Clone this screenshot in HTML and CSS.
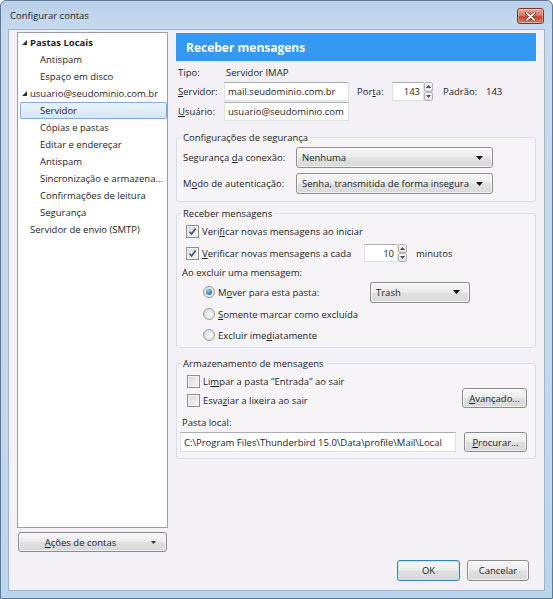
FILE: index.html
```html
<!DOCTYPE html>
<html lang="pt-BR">
<head>
<meta charset="utf-8">
<title>Configurar contas</title>
<link rel="stylesheet" href="styles.css">
</head>
<body>
<div class="window">
  <div class="titlebar">
    <span class="title">Configurar contas</span>
    <div class="close">
      <svg width="11" height="9" viewBox="0 0 11 9"><path d="M1.5 1 L9.5 8 M9.5 1 L1.5 8" stroke="#5a1d12" stroke-width="3.2" stroke-linecap="round"/><path d="M1.5 1 L9.5 8 M9.5 1 L1.5 8" stroke="#ffffff" stroke-width="1.8" stroke-linecap="round"/></svg>
    </div>
  </div>
  <div class="client">
    <div class="panes">
      <div class="sidebar">
        <div class="tree">
          <div class="item lvl0 bold"><span class="exp"><svg width="5" height="5" viewBox="0 0 5 5"><polygon points="5,0 5,5 0,5" fill="#333"/></svg></span>Pastas Locais</div>
          <div class="item lvl1">Antispam</div>
          <div class="item lvl1">Espaço em disco</div>
          <div class="item lvl0"><span class="exp"><svg width="5" height="5" viewBox="0 0 5 5"><polygon points="5,0 5,5 0,5" fill="#333"/></svg></span>usuario@seudominio.com.br</div>
          <div class="item lvl1 selected">Servidor</div>
          <div class="item lvl1">Cópias e pastas</div>
          <div class="item lvl1">Editar e endereçar</div>
          <div class="item lvl1">Antispam</div>
          <div class="item lvl1">Sincronização e armazena...</div>
          <div class="item lvl1">Confirmações de leitura</div>
          <div class="item lvl1">Segurança</div>
          <div class="item lvl0 noexp">Servidor de envio (SMTP)</div>
        </div>
        <div class="btn actions"><span class="btn-text"><u>A</u>ções de contas</span><span class="btn-arrow"><svg width="5" height="3" viewBox="0 0 5 3"><polygon points="0,0 5,0 2.5,3" fill="#333"/></svg></span></div>
      </div>
      <div class="main">
        <div class="header">Receber mensagens</div>
        <div class="srow tipo"><span class="lbl">Tipo:</span><span class="val">Servidor IMAP</span></div>
        <div class="srow"><span class="lbl"><u>S</u>ervidor:</span><div class="input w-server">mail.seudominio.com.br</div><span class="lbl-porta">Por<u>t</u>a:</span><div class="input w-port right">143</div><div class="spin"><span class="up"><svg width="5" height="3" viewBox="0 0 5 3"><polygon points="0,3 5,3 2.5,0" fill="#4d4d4d"/></svg></span><span class="down"><svg width="5" height="3" viewBox="0 0 5 3"><polygon points="0,0 5,0 2.5,3" fill="#4d4d4d"/></svg></span></div><span class="lbl-padrao">Padrão:</span><span>143</span></div>
        <div class="srow user"><span class="lbl"><u>U</u>suário:</span><div class="input w-server">usuario@seudominio.com</div></div>

        <fieldset class="group sec">
          <legend>Configurações de segurança</legend>
          <div class="frow"><span class="flbl">Segurança <u>d</u>a conexão:</span><div class="select w-sec"><span>Nenhuma</span><svg width="7" height="4" viewBox="0 0 7 4"><polygon points="0,0 7,0 3.5,4" fill="#111"/></svg></div></div>
          <div class="frow r2"><span class="flbl">M<u>o</u>do de autenticação:</span><div class="select w-sec"><span>Senha, transmitida de forma insegura</span><svg width="7" height="4" viewBox="0 0 7 4"><polygon points="0,0 7,0 3.5,4" fill="#111"/></svg></div></div>
        </fieldset>

        <fieldset class="group recv">
          <legend>Receber mensagens</legend>
          <div class="crow c1"><span class="cb"><svg width="9" height="9" viewBox="0 0 9 9"><path d="M1.5 4.8 L3.6 7 L7.6 1.6" fill="none" stroke="#3b4f86" stroke-width="1.6"/></svg></span><span>Veri<u>f</u>icar novas mensagens ao iniciar</span></div>
          <div class="crow c2"><span class="cb"><svg width="9" height="9" viewBox="0 0 9 9"><path d="M1.5 4.8 L3.6 7 L7.6 1.6" fill="none" stroke="#3b4f86" stroke-width="1.6"/></svg></span><span class="c2lbl"><u>V</u>erificar novas mensagens a cada</span><div class="input w-min right">10</div><div class="spin tall"><span class="up"><svg width="5" height="3" viewBox="0 0 5 3"><polygon points="0,3 5,3 2.5,0" fill="#4d4d4d"/></svg></span><span class="down"><svg width="5" height="3" viewBox="0 0 5 3"><polygon points="0,0 5,0 2.5,3" fill="#4d4d4d"/></svg></span></div><span class="minutos">minutos</span></div>
          <div class="plain excl">Ao excluir uma mensagem:</div>
          <div class="rrow r1"><span class="radio on"><span class="dot"></span></span><span class="rlbl">M<u>o</u>ver para esta pasta:</span><div class="select w-trash"><span>Trash</span><svg width="7" height="4" viewBox="0 0 7 4"><polygon points="0,0 7,0 3.5,4" fill="#111"/></svg></div></div>
          <div class="rrow r2"><span class="radio"></span><span><u>S</u>omente marcar como excluída</span></div>
          <div class="rrow r3"><span class="radio"></span><span>Excluir ime<u>d</u>iatamente</span></div>
        </fieldset>

        <fieldset class="group store">
          <legend>Armazenamento de mensagens</legend>
          <div class="store-top">
            <div class="checks">
              <div class="crow s1"><span class="cb"></span><span>Li<u>m</u>par a pasta “Entrada” ao sair</span></div>
              <div class="crow s2"><span class="cb"></span><span>Esva<u>z</u>iar a lixeira ao sair</span></div>
            </div>
            <div class="btn w-adv"><u>A</u>vançado...</div>
          </div>
          <div class="plain pasta">Pasta local:</div>
          <div class="path-row"><div class="input w-path">C:\Program Files\Thunderbird 15.0\Data\profile\Mail\Local</div><div class="btn w-proc"><u>P</u>rocurar...</div></div>
        </fieldset>
      </div>
    </div>
    <div class="footer">
      <div class="btn default w-ok">OK</div>
      <div class="btn w-cancel">Cancelar</div>
    </div>
  </div>
</div>
</body>
</html>
```

FILE: styles.css
```css
* { box-sizing: border-box; }
html, body { margin: 0; padding: 0; }
body {
  font-family: "Open Sans", "Noto Sans", sans-serif;
  font-size: 9.5px;
  color: #1e1e1e;
  background: #ffffff;
}
u { text-decoration: underline; text-underline-offset: 1px; }

.window {
  width: 553px;
  height: 599px;
  display: flex;
  flex-direction: column;
  border: 1px solid #5f7895;
  border-radius: 6px 6px 0 0;
  background: linear-gradient(to bottom, #bad1ea 0px, #c6d9ee 28px, #c4d8ee 60%, #b9d6ee 100%);
}

.titlebar {
  height: 28px;
  display: flex;
  align-items: flex-start;
  justify-content: space-between;
  padding: 7px 8px 0 9px;
}
.title { line-height: 15px; color: #1b1b1b; }
.close {
  width: 27px;
  height: 16px;
  border: 1px solid #7a3528;
  border-radius: 3px;
  background: linear-gradient(to bottom, #e9a89a 0%, #d77a66 45%, #c4472e 55%, #d47e68 100%);
  display: flex;
  align-items: center;
  justify-content: center;
  box-shadow: inset 0 0 0 1px rgba(255,255,255,0.35);
}

.client {
  flex: 1;
  margin: 0 7px 7px 7px;
  border: 1px solid #9fb4cc;
  background: #f4f1f6;
  padding: 2px 8px 9px 8px;
  display: flex;
  flex-direction: column;
}

.panes {
  height: 520px;
  display: flex;
  gap: 8px;
}

.sidebar {
  width: 151px;
  display: flex;
  flex-direction: column;
  gap: 4px;
}
.tree {
  height: 496px;
  background: #ffffff;
  border: 1px solid #9a9ea6;
  padding-top: 1px;
}
.item {
  height: 17px;
  line-height: 15px;
  display: flex;
  align-items: center;
  white-space: nowrap;
  border: 1px solid transparent;
  color: #1e1e1e;
}
.lvl0 { padding-left: 3px; }
.lvl0.noexp { padding-left: 11px; }
.lvl1 { padding-left: 21px; }
.bold { font-weight: bold; }
.exp { width: 8px; display: inline-flex; align-items: center; }
.selected {
  margin-left: 2px;
  padding-left: 19px;
  border: 1px solid #84acdd;
  border-radius: 2px;
  background: linear-gradient(to bottom, #eaf3fd 0%, #d3e6fc 100%);
}

.btn {
  height: 20px;
  border: 1px solid #8c8c8c;
  border-radius: 3px;
  background: linear-gradient(to bottom, #f7f7f7 0%, #ececec 48%, #dfdfdf 52%, #d8d8d8 100%);
  display: flex;
  align-items: center;
  justify-content: center;
  color: #1e1e1e;
  white-space: nowrap;
  box-shadow: inset 0 0 0 1px rgba(255,255,255,0.6);
}
.actions {
  width: 149px;
  margin-left: 1px;
  justify-content: flex-start;
}
.btn-text { flex: 1; text-align: center; padding-left: 2px; }
.btn-arrow { width: 26px; display: flex; justify-content: center; }

.main {
  width: 360px;
  display: flex;
  flex-direction: column;
}
.header {
  margin-top: 1px;
  height: 28px;
  background: #3598f2;
  color: #ffffff;
  font-weight: bold;
  font-size: 12px;
  display: flex;
  align-items: center;
  padding-left: 10px;
}

.srow {
  display: flex;
  align-items: center;
  height: 19px;
  margin-top: 2px;
  white-space: nowrap;
}
.srow.tipo { margin-top: 3px; height: 16px; }
.srow.user { margin-top: 1px; }
.lbl { width: 48px; padding-left: 2px; }
.val { padding-left: 2px; }
.lbl-porta { margin-left: 8px; width: 35px; }
.lbl-padrao { margin-left: 10px; width: 43px; }

.input {
  height: 19px;
  background: #ffffff;
  border: 1px solid #dde2e8;
  border-top-color: #abadb3;
  padding: 0 3px;
  display: flex;
  align-items: center;
  overflow: hidden;
  white-space: nowrap;
}
.input.right { justify-content: flex-end; }
.w-server { width: 125px; }
.w-port { width: 32px; }
.w-min { width: 34px; height: 18px; font-weight: normal; }
.w-path { width: 276px; height: 20px; }

.spin {
  width: 9px;
  height: 19px;
  display: flex;
  flex-direction: column;
}
.spin.tall { height: 18px; }
.spin span {
  flex: 1;
  display: flex;
  align-items: center;
  justify-content: center;
  border: 1px solid #b4b4b4;
  border-radius: 2px;
  background: linear-gradient(to bottom, #f8f8f8, #e2e2e2);
}

.group {
  margin: 0;
  border: 1px solid #d5dfe5;
  border-radius: 3px;
  padding: 0 8px 0 4px;
  background: rgba(255,255,255,0.25);
  min-width: 0;
}
.group legend {
  padding: 0 2px;
  line-height: 13px;
  color: #1e1e1e;
}
.sec { margin-top: 10px; padding-bottom: 7px; }
.recv { margin-top: 5px; padding-bottom: 3px; }
.store { margin-top: 9px; padding-bottom: 6px; }

.frow {
  display: flex;
  align-items: center;
  margin-top: 3px;
  white-space: nowrap;
}
.frow.r2 { margin-top: 5px; }
.flbl { width: 115px; padding-left: 2px; }

.select {
  height: 21px;
  border: 1px solid #8e8e8e;
  border-radius: 3px;
  background: linear-gradient(to bottom, #f6f6f6 0%, #ececec 48%, #e0e0e0 52%, #dadada 100%);
  box-shadow: inset 0 0 0 1px rgba(255,255,255,0.6);
  display: flex;
  align-items: center;
  justify-content: space-between;
  padding: 0 9px 0 5px;
  white-space: nowrap;
}
.w-sec { width: 197px; }
.w-trash { width: 100px; }

.crow {
  display: flex;
  align-items: center;
  height: 18px;
  white-space: nowrap;
}
.c1 { margin-top: 2px; margin-left: 5px; }
.c2 { margin-top: 4px; margin-left: 5px; }
.cb {
  width: 13px;
  height: 13px;
  border: 1px solid #8f8f8f;
  background: linear-gradient(135deg, #d6d6d6 0%, #ececec 60%, #f6f6f6 100%);
  box-shadow: inset 0 0 0 1px #f4f4f4;
  margin-right: 3px;
  display: inline-flex;
  align-items: center;
  justify-content: center;
  flex: none;
}
.c2lbl { width: 162px; }
.minutos { margin-left: 9px; }

.plain { height: 16px; display: flex; align-items: center; padding-left: 1px; }
.excl { margin-top: 2px; }

.rrow {
  display: flex;
  align-items: center;
  height: 18px;
  margin-left: 22px;
  white-space: nowrap;
}
.rrow.r1 { margin-top: 2px; height: 20px; }
.rrow.r2 { margin-top: 3px; }
.rrow.r3 { margin-top: 3px; }
.radio {
  width: 12px;
  height: 12px;
  border: 1px solid #9a9a9a;
  border-radius: 50%;
  background: radial-gradient(circle at 60% 60%, #f6f6f6 0%, #e4e4e4 60%, #d2d2d2 100%);
  margin-right: 3px;
  display: inline-flex;
  align-items: center;
  justify-content: center;
  flex: none;
}
.radio .dot {
  width: 6px;
  height: 6px;
  border-radius: 50%;
  background: radial-gradient(circle at 40% 35%, #9fd0f5 0%, #3a86c9 55%, #1f4e86 100%);
}
.rlbl { width: 152px; }

.store-top {
  display: flex;
  justify-content: space-between;
  align-items: flex-end;
  margin-top: 2px;
}
.checks { display: flex; flex-direction: column; margin-left: 6px; }
.s2 { margin-top: 1px; }
.w-adv { width: 65px; margin-bottom: 1px; }
.pasta { margin-top: 5px; }
.path-row {
  display: flex;
  align-items: center;
  justify-content: space-between;
  margin-top: 2px;
  margin-left: -1px;
}
.w-proc { width: 63px; height: 20px; }

.footer {
  margin-top: 8px;
  height: 21px;
  display: flex;
  justify-content: flex-end;
  gap: 7px;
  padding-right: 7px;
}
.w-ok { width: 63px; height: 21px; }
.w-cancel { width: 62px; height: 21px; }
.default {
  border-color: #3c7fb1;
  box-shadow: inset 0 0 0 1px #c2e6f8;
}
```
